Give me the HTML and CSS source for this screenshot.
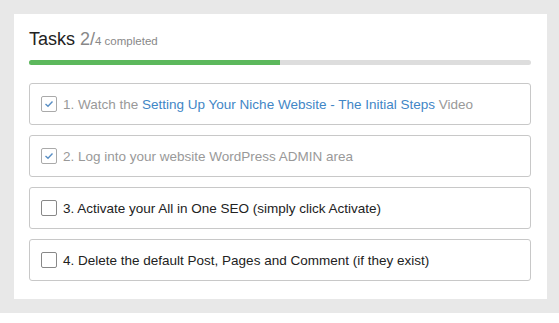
FILE: index.html
```html
<!DOCTYPE html>
<html lang="en">
<head>
  <meta charset="UTF-8" />
  <title>Tasks</title>
  <link rel="stylesheet" href="styles.css">
</head>
<body>
  <div class="wrap">
    <div class="panel">
      <h2 class="title">Tasks <span class="count">2/</span><span class="total">4 completed</span></h2>
      <div class="progress"><div class="progress-fill" style="width: 50%"></div></div>
      <ul class="tasks">
        <li class="task done">
          <span class="check"><svg width="10" height="8" viewBox="0 0 10 8"><path d="M1.5 4 L4 6.3 L8.5 1.5" fill="none" stroke="#5a8fc4" stroke-width="1.4"/></svg></span>
          <span>1. Watch the <a href="#">Setting Up Your Niche Website - The Initial Steps</a> Video</span>
        </li>
        <li class="task done">
          <span class="check"><svg width="10" height="8" viewBox="0 0 10 8"><path d="M1.5 4 L4 6.3 L8.5 1.5" fill="none" stroke="#5a8fc4" stroke-width="1.4"/></svg></span>
          <span>2. Log into your website WordPress ADMIN area</span>
        </li>
        <li class="task">
          <span class="check"></span>
          <span>3. Activate your All in One SEO (simply click Activate)</span>
        </li>
        <li class="task">
          <span class="check"></span>
          <span>4. Delete the default Post, Pages and Comment (if they exist)</span>
        </li>
      </ul>
    </div>
  </div>
</body>
</html>
```

FILE: styles.css
```css
body {
  margin: 0;
  background: #fff;
  font-family: 'Liberation Sans', Arial, sans-serif;
}
.wrap {
  background: #e8e8e8;
  height: 313px;
  padding: 14px 12px 0 14px;
  box-sizing: border-box;
}
.panel {
  background: #fff;
  height: 285px;
  padding: 0 16px 0 15px;
  box-sizing: border-box;
}
.title {
  margin: 0;
  padding-top: 13px;
  font-weight: normal;
  font-size: 18px;
  line-height: 24px;
  color: #222;
}
.count {
  color: #888;
}
.total {
  font-size: 11.5px;
  color: #888;
}
.progress {
  margin-top: 7px;
  height: 5px;
  background: #ddd;
  border-radius: 3px;
  overflow: hidden;
}
.progress-fill {
  height: 100%;
  background: #5cb85c;
}
.tasks {
  list-style: none;
  margin: 18px 0 0;
  padding: 0;
  display: flex;
  flex-direction: column;
  gap: 10px;
}
.task {
  height: 42px;
  box-sizing: border-box;
  border: 1px solid #c8c8c8;
  border-radius: 3px;
  display: flex;
  align-items: center;
  gap: 6px;
  padding-left: 11px;
  font-size: 13.5px;
  color: #222;
}
.task.done {
  color: #999;
}
.task a {
  color: #3f86c6;
  text-decoration: none;
}
.check {
  width: 16px;
  height: 16px;
  box-sizing: border-box;
  border: 1px solid #888;
  border-radius: 2px;
  display: flex;
  align-items: center;
  justify-content: center;
  flex-shrink: 0;
}
.task.done .check {
  border-color: #aaa;
}
```
